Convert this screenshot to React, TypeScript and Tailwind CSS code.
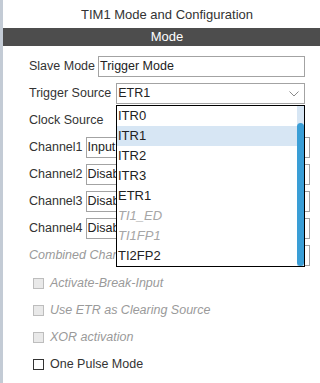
const options = [
  { label: 'ITR0' },
  { label: 'ITR1', active: true },
  { label: 'ITR2' },
  { label: 'ITR3' },
  { label: 'ETR1' },
  { label: 'TI1_ED', disabled: true },
  { label: 'TI1FP1', disabled: true },
  { label: 'TI2FP2' },
]

const channels = [
  { label: 'Channel1', value: 'Input Capture direct mode' },
  { label: 'Channel2', value: 'Disable' },
  { label: 'Channel3', value: 'Disable' },
  { label: 'Channel4', value: 'Disable' },
]

const checks = [
  { label: 'Activate-Break-Input', disabled: true },
  { label: 'Use ETR as Clearing Source', disabled: true },
  { label: 'XOR activation', disabled: true },
  { label: 'One Pulse Mode' },
]

function Field({ value, className = '' }: { value: string; className?: string }) {
  return (
    <div className={`h-[21px] flex-1 min-w-0 border border-[#a3a3a3] bg-white px-[1px] flex items-center overflow-hidden whitespace-nowrap text-[#222] ${className}`}>
      {value}
    </div>
  )
}

export default function App() {
  return (
    <div className="w-[320px] h-[383px] flex bg-white overflow-hidden font-['Liberation_Sans',Arial,sans-serif] text-[12.5px] text-[#333]">
      <div className="w-[3px] shrink-0 bg-[#c3cbd5]" />
      <div className="flex-1 flex flex-col">
        <div className="h-[28px] flex items-center justify-center pl-[11px] pt-[1px] text-[13px] text-[#333]">
          TIM1 Mode and Configuration
        </div>
        <div className="h-[18px] flex items-center justify-center pl-[11px] bg-[#4d4d4d] text-white text-[13px]">
          Mode
        </div>

        <div className="flex flex-col gap-[6px] pt-[10px] pl-[26px]">
          <div className="flex items-center gap-[3px] pr-[15px]">
            <span className="whitespace-nowrap">Slave Mode</span>
            <Field value="Trigger Mode" />
          </div>

          <div className="relative flex items-center gap-[5px] pr-[15px]">
            <span className="whitespace-nowrap">Trigger Source</span>
            <div className="relative h-[21px] flex-1 border border-[#a3a3a3] bg-white px-[1px] flex items-center text-[#222]">
              ETR1
              <svg width="10" height="6" viewBox="0 0 10 6" className="absolute right-[5px] top-[7px]">
                <polyline points="0.5,0.5 5,5 9.5,0.5" fill="none" stroke="#8a8a8a" strokeWidth="1" />
              </svg>
            </div>
            <div className="absolute z-10 left-[87px] top-[22px] w-[189px] h-[162px] border border-black bg-white flex">
              <div className="flex-1 flex flex-col">
                {options.map((o) => (
                  <div
                    key={o.label}
                    className={`h-[20px] flex items-center pl-[1px] text-[13px] ${o.active ? 'bg-[#d7e6f4]' : ''} ${o.disabled ? 'italic text-[#a6a6a6]' : 'text-[#222]'}`}
                  >
                    {o.label}
                  </div>
                ))}
              </div>
              <div className="w-[7px] bg-[#d7e6f4] flex flex-col pt-[17px]">
                <div className="flex-1 rounded-full bg-[#3a9ed6]" />
              </div>
            </div>
          </div>

          <div className="flex items-center pr-[15px]">
            <span className="whitespace-nowrap">Clock Source</span>
            <Field value="Disable" className="ml-auto flex-none w-[189px]" />
          </div>

          {channels.map((c) => (
            <div key={c.label} className="flex items-center gap-[3px] pr-[10px]">
              <span className="whitespace-nowrap">{c.label}</span>
              <Field value={c.value} />
            </div>
          ))}

          <div className="flex items-center gap-[3px] pr-[10px]">
            <span className="whitespace-nowrap italic text-[#9a9a9a]">Combined Channels</span>
            <Field value="" />
          </div>
        </div>

        <div className="flex flex-col pt-[4px] pl-[30px]">
          {checks.map((c) => (
            <div key={c.label} className="h-[27px] flex items-center gap-[6px]">
              <span
                className={`w-[11px] h-[11px] shrink-0 border ${c.disabled ? 'border-[#bdbdbd] bg-[#e9e9e9]' : 'border-[#333] bg-white'}`}
              />
              <span className={c.disabled ? 'italic text-[#9a9a9a]' : 'text-[#333]'}>{c.label}</span>
            </div>
          ))}
        </div>
      </div>
    </div>
  )
}
